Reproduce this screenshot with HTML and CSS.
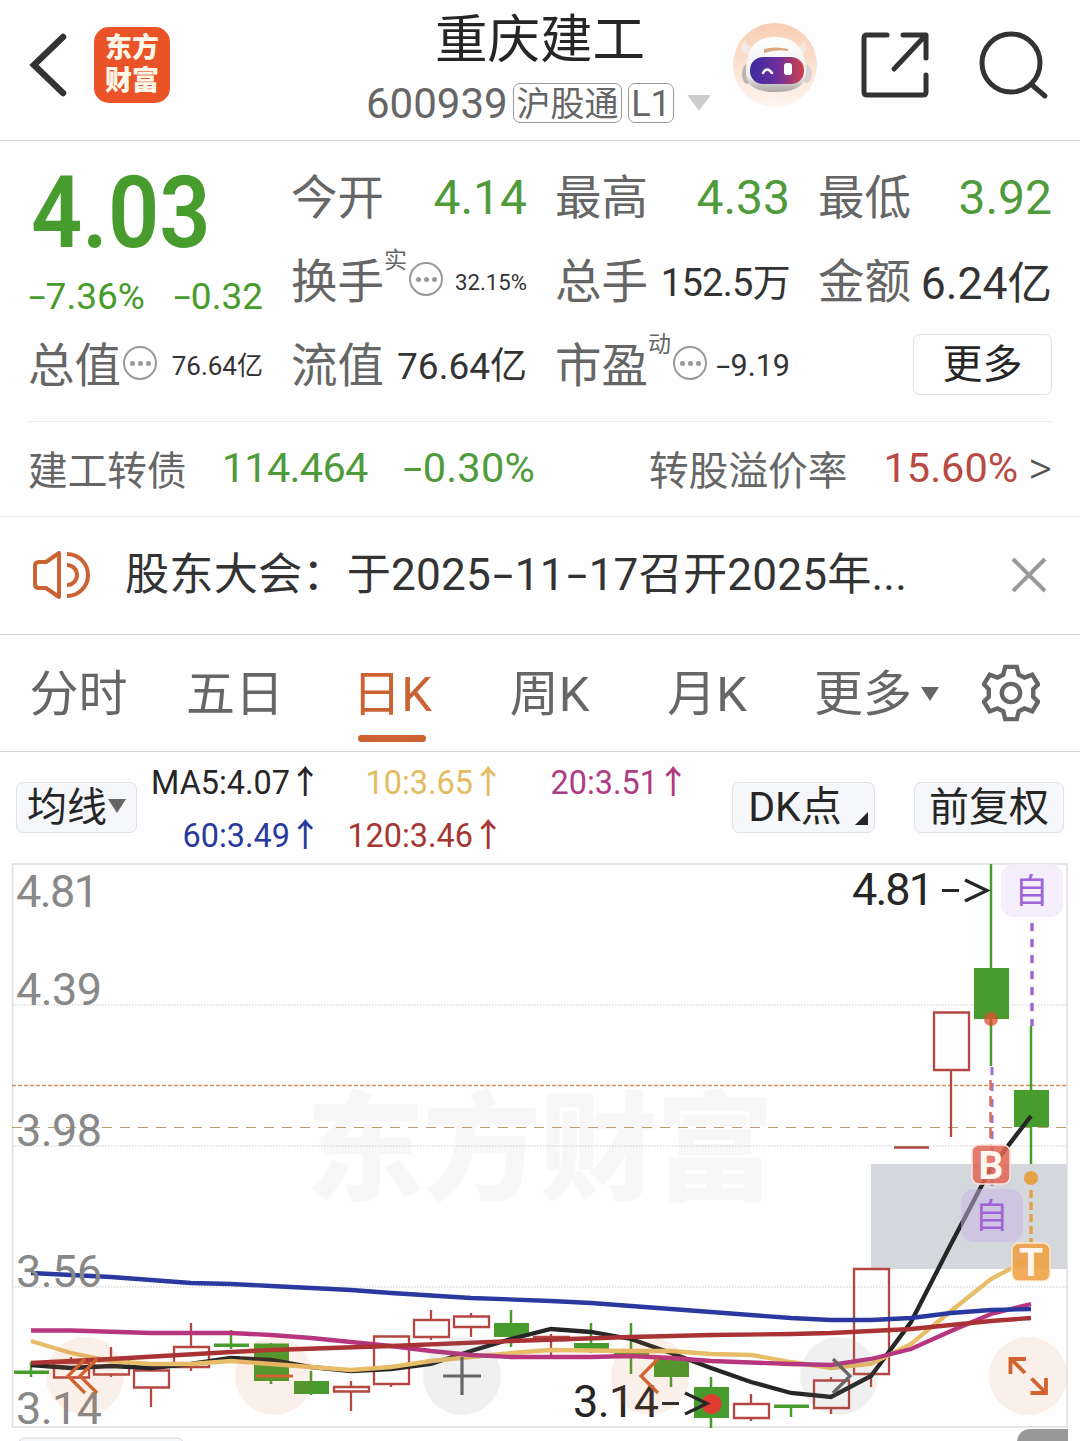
FILE: index.html
```html
<!DOCTYPE html>
<html lang="zh-CN">
<head>
    <meta charset="UTF-8">
    <title>重庆建工 600939</title>
    <link rel="stylesheet" href="styles.css">
</head>
<body>
    <header class="header">
        <svg class="back" width="40" height="66" viewBox="0 0 40 66"><path d="M35 5 L6 33 L35 61" fill="none" stroke="#333" stroke-width="6.5" stroke-linecap="round"/></svg>
        <div class="logo"><span>东方</span><span>财富</span></div>
        <div class="stock">
            <h1>重庆建工</h1>
            <div class="code">
                <span class="code-num">600939</span>
                <span class="tag">沪股通</span>
                <span class="tag tag-l1">L1</span>
                <svg class="caret" width="26" height="18" viewBox="0 0 26 18"><path d="M2 1.500h22L13 16z" fill="#ccc" stroke="#ccc" stroke-linejoin="round"/></svg>
            </div>
        </div>
        <svg class="avatar" width="86" height="88" viewBox="0 0 86 88">
            <defs>
                <linearGradient id="skin" x1="0" y1="0" x2="0" y2="1"><stop offset="0" stop-color="#f8cdb2"/><stop offset="1" stop-color="#fff5f0"/></linearGradient>
                <linearGradient id="visor" x1="0" y1="0" x2="1" y2="0"><stop offset="0" stop-color="#3b2ba0"/><stop offset=".5" stop-color="#6b2f9e"/><stop offset="1" stop-color="#d2414b"/></linearGradient>
                <linearGradient id="helmet" x1="0" y1="0" x2="0" y2="1"><stop offset="0" stop-color="#fff"/><stop offset=".7" stop-color="#f1efee"/><stop offset="1" stop-color="#aaa4a3"/></linearGradient>
            </defs>
            <circle cx="43" cy="44" r="42" fill="url(#skin)"/>
            <path d="M13 19c-6 6-5 14 5 15l8-8c-8 1-12-2-13-7zM72 19c4 6 3 14-4 15l-9-8c8 1 12-2 13-7z" fill="#f3e8e3"/>
            <ellipse cx="15" cy="53" rx="5" ry="10" fill="#b9b4b4"/>
            <ellipse cx="75" cy="53" rx="5" ry="9" fill="#d9d4d3"/>
            <path d="M14 48C15 25 25 16 43 16s29 9 31 32c1 17-10 23-31 23S13 64 14 48z" fill="url(#helmet)"/>
            <path d="M32 28q11-3 24 0v2q-12-2-24 2z" fill="#d9a77e"/>
            <rect x="18" y="36" width="54" height="27" rx="13" fill="url(#visor)"/>
            <path d="M31 52q4-7 9 0" fill="none" stroke="#fff" stroke-width="2.500" stroke-linecap="round"/>
            <rect x="52" y="42" width="8" height="12" rx="3" fill="#fff"/>
        </svg>
        <svg class="share" width="70" height="70" viewBox="0 0 70 70" fill="none" stroke="#333" stroke-width="5" stroke-linecap="round" stroke-linejoin="round"><path d="M27 5H7q-3 0-3 3v54q0 3 3 3h56q3 0 3-3V45M43 5h23v23M64 7L34 39"/></svg>
        <svg class="search" width="72" height="72" viewBox="0 0 72 72" fill="none" stroke="#333" stroke-width="5" stroke-linecap="round"><circle cx="33" cy="34" r="29"/><path d="M54 56l13 11"/></svg>
    </header>

    <section class="quote">
        <div class="price-box">
            <div class="price">4.03</div>
            <div class="change"><span><i class="dash">-</i>7.36%</span><span><i class="dash">-</i>0.32</span></div>
        </div>
        <div class="cell"><span class="label">今开</span><span class="val green v48">4.14</span></div>
        <div class="cell"><span class="label">最高</span><span class="val green v48">4.33</span></div>
        <div class="cell"><span class="label">最低</span><span class="val green v48">3.92</span></div>
        <div class="cell"><span class="label">换手</span><sup>实</sup><span class="dots"><b></b><b></b><b></b></span><span class="val v22">32.15%</span></div>
        <div class="cell"><span class="label">总手</span><span class="val unit v38">152.5<em>万</em></span></div>
        <div class="cell"><span class="label">金额</span><span class="val unit v45">6.24<em>亿</em></span></div>
        <div class="cell"><span class="label">总值</span><span class="dots"><b></b><b></b><b></b></span><span class="val unit v26">76.64<em>亿</em></span></div>
        <div class="cell"><span class="label">流值</span><span class="val unit v37">76.64<em>亿</em></span></div>
        <div class="cell"><span class="label">市盈</span><sup>动</sup><span class="dots"><b></b><b></b><b></b></span><span class="val v30"><i class="dash">-</i>9.19</span></div>
        <div class="cell"><button class="more">更多</button></div>
    </section>

    <section class="bond">
        <span class="bond-name">建工转债</span>
        <span class="bond-price">114.464</span>
        <span class="bond-rate"><i class="dash">-</i>0.30%</span>
        <span class="premium">转股溢价率</span>
        <span class="premium-rate">15.60%</span>
        <span class="gt">&gt;</span>
    </section>

    <section class="notice">
        <svg width="58" height="50" viewBox="0 0 58 50" fill="none" stroke="#cb6232" stroke-width="4"><path d="M26 3v44L13 38H6q-4 0-4-4V16q0-4 4-4h7z" stroke-linejoin="round"/><path d="M34 4a21 21 0 0 1 0 42M34 15a10 10 0 0 1 0 20"/></svg>
        <p>股东大会：于2025<i class="dash">-</i>11<i class="dash">-</i>17召开2025年...</p>
        <svg width="36" height="36" viewBox="0 0 36 36" stroke="#999" stroke-width="4"><path d="M2 2l32 32M34 2L2 34"/></svg>
    </section>

    <nav class="tabs">
        <a>分时</a>
        <a>五日</a>
        <a class="active">日K</a>
        <a>周K</a>
        <a>月K</a>
        <a>更多<span class="arrow-down"></span></a>
        <svg width="58" height="58" viewBox="0 0 60 60" fill="none" stroke="#666" stroke-width="4.500"><path d="M24 3h12l2 8 6 3 8-3 6 10-5 5v8l5 5-6 10-8-3-6 3-2 8H24l-2-8-6-3-8 3-6-10 5-5v-8l-5-5 6-10 8 3 6-3z"/><circle cx="30" cy="30" r="9.500"/></svg>
    </nav>

    <section class="toolbar">
        <button class="ma-btn">均线<span class="arrow-down"></span></button>
        <div class="ma">
            <span class="ma5">MA5:4.07<u>↑</u></span><span class="ma10">10:3.65<u>↑</u></span><span class="ma20">20:3.51<u>↑</u></span>
            <span class="ma60">60:3.49<u>↑</u></span><span class="ma120">120:3.46<u>↑</u></span>
        </div>
        <button class="dk">DK点<span class="corner"></span></button>
        <button class="fq">前复权</button>
    </section>

    <svg class="chart" width="1080" height="579" viewBox="0 862 1080 579">
        <text class="watermark" x="306" y="1191" textLength="468">东方财富</text>
        <g class="grid">
            <path d="M12 1005H1067M12 1146H1067M12 1287H1067"/>
        </g>
        <rect x="12.500" y="864" width="1054.500" height="563" fill="none" stroke="#dedede" stroke-width="1.500"/>
        <path d="M12 1085.500H1067" stroke="#c7945c" stroke-width="1.500" stroke-dasharray="4 2"/>
        <path d="M12 1127.500H1067" stroke="#b99d6b" stroke-width="1.200" stroke-dasharray="10 8"/>
        <rect x="871" y="1164" width="196" height="105" fill="#d4d7dc"/>
        <g id="candles"></g>
        <g id="lines"></g>

        <g class="axis">
            <text x="16" y="906.500" textLength="83">4.81</text>
            <text x="16" y="1004.500" textLength="86">4.39</text>
            <text x="16" y="1145.500" textLength="86">3.98</text>
            <text x="16" y="1286.500" textLength="86">3.56</text>
            <text x="16" y="1423.500" textLength="86">3.14</text>
        </g>

        <!-- buy / sell / watch marks -->
        <path d="M992 1067V1186" stroke="#a46bdc" stroke-width="3" stroke-dasharray="8 8"/>
        <path d="M990.500 1080V1146" stroke="#d9705f" stroke-width="2.500" stroke-dasharray="10 6"/>
        <path d="M1032 923V1026" stroke="#9c68d4" stroke-width="3.500" stroke-dasharray="8 8"/>
        <path d="M1031 1190V1243" stroke="#e2a24b" stroke-width="3.500" stroke-dasharray="8 4"/>
        <circle cx="991" cy="1019" r="7" fill="#dc4f2c" fill-opacity=".75"/>
        <circle cx="1031" cy="1178" r="7" fill="#e7a146"/>
        <rect x="972" y="1145" width="38" height="39" rx="7" fill="#df6555" fill-opacity=".85" stroke="#f9e2dc" stroke-width="1.500"/>
        <text class="mark" x="991" y="1178.500" text-anchor="middle">B</text>
        <rect x="961" y="1189" width="62" height="53" rx="13" fill="#c8b6e6" fill-opacity=".5"/>
        <text class="self" x="991.500" y="1227.500" text-anchor="middle">自</text>
        <rect x="1001" y="864" width="62" height="53" rx="13" fill="#f3edfc"/>
        <text class="self" x="1031.500" y="903" text-anchor="middle">自</text>
        <rect x="1012" y="1243" width="38" height="38" rx="7" fill="#efa143" fill-opacity=".88" stroke="#fbe7cc" stroke-width="1.500"/>
        <text class="mark" x="1031" y="1276" text-anchor="middle">T</text>
        <circle cx="711.500" cy="1404" r="10" fill="#e03c30"/>

        <g class="peak">
            <text x="852" y="904.500" textLength="82">4.81</text><path d="M942 890.500h17M965 880l22 10.500-22 10.500"/>
            <text x="573" y="1417" textLength="86">3.14</text><path d="M662 1403.500h17M685 1393l22 10.500-22 10.500"/>
        </g>

        <!-- round controls -->
        <g fill-opacity=".1">
            <g fill="#d86a30"><circle cx="85" cy="1376" r="39"/><circle cx="274" cy="1376" r="39"/><circle cx="650" cy="1376" r="39"/><circle cx="1028" cy="1376" r="39"/></g>
            <g fill="#777"><circle cx="462" cy="1376" r="39"/><circle cx="839" cy="1376" r="39"/></g>
        </g>
        <g fill="none" stroke="#d2622e" stroke-width="3.200">
            <path d="M85 1359l-17 17 17 17M97 1359l-17 17 17 17M256 1376h37M658 1359l-17 17 17 17"/>
            <path d="M1010.500 1374v-15h15.500M1012 1360l13 13M1030.500 1393h15.500v-15M1045 1392l-13.500-13.500" stroke-width="3.800"/>
        </g>
        <path d="M443 1376h38M462 1357v38M833 1359l17 17-17 17" fill="none" stroke="#666" stroke-width="3.200"/>

        <rect x="18" y="1438" width="166" height="30" rx="7" fill="#f6f7fa" stroke="#d4d7da"/>
        <path d="M1017 1441q2-12 14-12h37v12z" fill="#999"/>
    </svg>

    <script>
        // [color, top, bottom, high, low], one candle every 40px
        const candles = [
            ['g', 1370.5, 1374, 1362, 1377], ['r', 1363, 1377.5, 1357, 1377], ['r', 1361, 1374.5, 1347, 1377],
            ['r', 1370.5, 1387.5, 1370, 1407], ['r', 1347, 1367, 1323, 1371], ['g', 1343.5, 1347, 1330, 1349],
            ['g', 1343.5, 1381, 1343, 1384], ['g', 1381, 1394, 1371, 1395], ['r', 1387, 1391.5, 1381, 1411],
            ['r', 1336.5, 1384, 1336, 1387], ['r', 1320, 1337, 1310, 1340], ['r', 1316.5, 1327, 1313, 1337],
            ['g', 1323, 1337, 1310, 1347], ['r', 1337, 1340, 1334, 1355], ['g', 1343, 1350, 1323, 1353],
            ['g', 1352, 1356, 1323, 1374], ['g', 1358, 1377, 1358, 1387], ['g', 1387, 1418, 1377, 1428],
            ['r', 1404, 1418, 1394, 1421], ['g', 1404.5, 1408, 1405, 1417], ['r', 1380.5, 1408, 1377, 1414],
            ['r', 1269, 1374, 1269, 1387], ['r', 1147.5, 1147.5, 1147, 1148], ['r', 1012.5, 1070, 1012, 1137],
            ['g', 968, 1019, 864, 1066], ['g', 1090, 1127, 1026, 1164]
        ];
        let html = '';
        candles.forEach(([color, top, bottom, high, low], i) => {
            const x = 31 + i * 40;
            if (color === 'g') {
                html += `<path d="M${x} ${high}V${low}" stroke="#479c2d" stroke-width="2.5"/>`;
                html += `<rect x="${x - 17}" y="${top}" width="35" height="${bottom - top}" fill="#479c2d"/>`;
            } else if (top === bottom) {
                html += `<path d="M${x - 17} ${top}h35" stroke="#a9443f" stroke-width="2.5"/>`;
            } else {
                html += `<path d="M${x} ${high}V${top}M${x} ${bottom}V${low}M${x - 17} ${top}h35V${bottom}h-35z" fill="none" stroke="#b54742" stroke-width="2.3"/>`;
            }
        });
        document.getElementById('candles').innerHTML = html;

        const lines = [
            ['#262626', '31,1365 71,1368 111,1366 151,1368 191,1364 231,1358 271,1360 311,1367 351,1371 391,1369 431,1364 471,1351 511,1339 551,1329 591,1332 631,1339 671,1353 711,1368 751,1382 791,1393 831,1397 871,1376 911,1322 951,1244 991,1168 1031,1116'],
            ['#e8bd68', '31,1341 71,1353 111,1361 151,1364 191,1364 231,1361 271,1364 311,1367 351,1370 391,1367 431,1361 471,1357 511,1353 551,1350 631,1351 671,1351 711,1354 751,1355 791,1362 831,1368 871,1364 911,1344 951,1311 991,1279 1031,1258'],
            ['#b7357f', '31,1330.5 71,1330.5 151,1333 231,1333 271,1335 311,1338 351,1342 391,1346 431,1351 471,1355 511,1357 591,1357 631,1356 671,1358 711,1361 791,1364 831,1365 871,1359 911,1349 951,1331 991,1314 1031,1304'],
            ['#a93334', '31,1363 111,1359 231,1352 271,1350 391,1346 511,1341 631,1337 711,1335 791,1334 831,1333 911,1329 991,1321 1031,1318'],
            ['#2939a0', '31,1273 71,1275 111,1277 151,1280 191,1283 231,1284 271,1286 351,1290 391,1293 471,1298 551,1301 591,1303 631,1306 711,1312 791,1318 831,1320 871,1320 911,1318 951,1313 991,1310 1031,1309']
        ];
        document.getElementById('lines').innerHTML = lines.map(([color, points]) =>
            `<polyline points="${points}" fill="none" stroke="${color}" stroke-width="4.3"/>`).join('');
    </script>
</body>
</html>
```
FILE: styles.css
```css
* {
    box-sizing: border-box;
}
body {
    margin: 0;
    width: 1080px;
    height: 1441px;
    overflow: hidden;
    background: #fefefe;
    color: #333;
    font-family: Roboto, "Noto Sans CJK SC", sans-serif;
}
svg {
    display: block;
    flex: none;
}
button {
    font-family: inherit;
    color: #262626;
    padding: 0;
    border: 1.5px solid #dfe1e4;
    border-radius: 7px;
    background: #f6f7fa;
    font-size: 40px;
    line-height: 49px;
    white-space: nowrap;
}
em, i {
    font-style: normal;
}
.dash {
    display: inline-block;
    transform: scaleX(1.65);
    margin: 0 .1em;
}

/* header */
.header {
    display: flex;
    align-items: flex-start;
    height: 141px;
    padding-left: 28px;
    border-bottom: 1.5px solid #d6d6d6;
}
.back {
    margin-top: 32px;
}
.logo {
    display: flex;
    flex-direction: column;
    justify-content: center;
    align-items: center;
    width: 76px;
    height: 76px;
    margin: 27px 0 0 26px;
    border-radius: 15px;
    background: #ea5328;
    color: #fff8ea;
    font-size: 27px;
    font-weight: 900;
    line-height: 33px;
}
.stock {
    width: 348px;
    margin: 0 -2px 0 196px;
}
.stock h1 {
    margin: 0;
    padding-top: 4px;
    font-size: 52.500px;
    font-weight: 400;
    line-height: 72px;
    color: #262626;
    text-align: center;
}
.code {
    display: flex;
    align-items: center;
    height: 54px;
    color: #666;
}
.code-num {
    width: 147px;
    font-size: 42px;
}
.tag {
    width: 109px;
    height: 40px;
    margin-right: 6px;
    border: 1.5px solid #999;
    border-radius: 7px;
    font-size: 34px;
    line-height: 40px;
    text-align: center;
}
.tag-l1 {
    width: 46px;
    font-size: 36px;
}
.caret {
    margin-left: 6px;
}
.avatar {
    margin: 21px 0 0 20px;
}
.share {
    margin: 30px 0 0 42px;
}
.search {
    margin: 29px 0 0 48px;
}

/* quote */
.quote {
    display: grid;
    grid-template-columns: 235px 236px 235px 234px;
    grid-template-rows: 84px 84px 84px;
    column-gap: 28px;
    height: 281px;
    margin: 0 28px;
    padding-top: 15px;
    border-bottom: 1.5px solid #eee;
}
.price-box {
    grid-row: span 2;
    color: #479c2d;
}
.price {
    margin: -3px 0 0 3px;
    font-size: 101px;
    font-weight: 600;
    line-height: 119px;
    transform: scaleX(.89);
    transform-origin: left;
}
.change {
    display: flex;
    justify-content: space-between;
    font-size: 37px;
    line-height: 49px;
}
.cell {
    display: flex;
    align-items: center;
    white-space: nowrap;
}
.label {
    margin-top: -9px;
    font-size: 46.500px;
    color: #666;
}
.cell sup {
    align-self: flex-start;
    margin-top: 4px;
    font-size: 23px;
    line-height: 34px;
    color: #666;
}
.val {
    margin: -1px 0 0 auto;
}
.unit {
    margin-top: -6px;
}
.green {
    color: #4f9a3b;
}
.v48 { font-size: 48px; }
.v45 { font-size: 44.500px; }
.v38 { font-size: 38px; letter-spacing: -.7px; }
.v37 { font-size: 37px; }
.v30 { font-size: 30.500px; }
.v26 { font-size: 26px; }
.v22 { font-size: 22.200px; }
.dots {
    display: flex;
    justify-content: center;
    align-items: center;
    gap: 3px;
    width: 34px;
    height: 34px;
    margin: -6px 0 0 2px;
    border: 2.500px solid #999;
    border-radius: 50%;
}
.dots b {
    width: 5px;
    height: 5px;
    border-radius: 50%;
    background: #999;
}
.more {
    width: 139px;
    height: 61px;
    margin: -3px 0 0 auto;
    background: #fefefe;
    line-height: 56px;
}

/* convertible bond */
.bond {
    display: flex;
    align-items: center;
    height: 95px;
    padding: 0 28px 3px;
    border-bottom: 1.5px solid #eee;
    font-size: 41.500px;
    color: #4f9a3b;
    white-space: nowrap;
}
.bond-name, .premium {
    font-size: 39.700px;
    color: #666;
}
.bond-price {
    margin-left: 35px;
    letter-spacing: -.7px;
}
.bond-rate {
    margin-left: 35px;
    letter-spacing: .2px;
}
.premium {
    margin-left: auto;
}
.premium-rate {
    margin-left: 36px;
    color: #b94a43;
}
.gt {
    margin-left: 10px;
    font-size: 46px;
    font-weight: 300;
    color: #555;
}

/* notice */
.notice {
    display: flex;
    align-items: center;
    height: 118px;
    padding: 0 33px 2px;
    border-bottom: 1.5px solid #d6d6d6;
}
.notice p {
    flex: 1;
    margin: -7px 0 0 34px;
    font-size: 44.200px;
    letter-spacing: .15px;
    white-space: nowrap;
}
.notice .dash {
    margin: 0 .13em;
}

/* tabs */
.tabs {
    display: grid;
    grid-template-columns: 157px 156px 158px 157px 158px 1fr 58px;
    align-items: center;
    justify-items: center;
    height: 117px;
    padding-right: 40px;
    border-bottom: 1.5px solid #d6d6d6;
    font-size: 49px;
    color: #666;
}
.tabs a {
    position: relative;
    margin-top: -8px;
    white-space: nowrap;
}
.tabs a:nth-child(6) {
    justify-self: start;
    margin-left: 28px;
}
.tabs .active {
    color: #cb6232;
}
.tabs .active::after {
    content: "";
    position: absolute;
    left: 6px;
    bottom: -17px;
    width: 68px;
    height: 7px;
    border-radius: 4px;
    background: #cb6232;
}
.arrow-down {
    display: inline-block;
    margin-left: 9px;
    vertical-align: 10px;
    border: 9px solid transparent;
    border-top: 14px solid #666;
    border-bottom: 0;
}

/* moving averages */
.toolbar {
    display: flex;
    align-items: flex-start;
    height: 110px;
    padding: 0 16px;
}
.toolbar button {
    height: 51px;
    margin-top: 30px;
}
.ma-btn {
    width: 121px;
}
.ma-btn .arrow-down {
    margin-left: 1px;
    vertical-align: 8px;
}
.ma {
    display: grid;
    grid-template-columns: 167px 183px 185px;
    grid-auto-rows: 53px;
    justify-items: end;
    width: 535px;
    margin: 1px 0 0 15px;
    font-size: 32.400px;
    line-height: 53px;
    white-space: nowrap;
}
.ma u {
    display: inline-block;
    width: 29px;
    text-decoration: none;
    font-family: "Noto Sans CJK SC", sans-serif;
    font-weight: 500;
    text-indent: -1px;
}
.ma5 { color: #262626; }
.ma10 { color: #e5bb62; }
.ma20 { color: #b03a83; }
.ma60 { color: #2939a0; }
.ma120 { color: #a53632; }
.dk {
    position: relative;
    width: 143px;
    margin-left: 45px;
    padding-right: 17px;
    font-size: 41px;
}
.corner {
    position: absolute;
    right: 6px;
    bottom: 7px;
    border-left: 13px solid transparent;
    border-bottom: 13px solid #262626;
}
.fq {
    width: 150px;
    margin-left: auto;
}

/* chart */
.watermark {
    font-size: 118px;
    font-weight: 900;
    fill: #f7f7f7;
}
.grid path {
    stroke: #ddd;
    stroke-width: 1.5;
    stroke-dasharray: 1.500 1.500;
}
.axis text {
    font-size: 45px;
    fill: #888;
}
.peak text {
    font-size: 45px;
    fill: #262626;
}
.peak path {
    fill: none;
    stroke: #262626;
    stroke-width: 3.2;
}
.mark {
    font-size: 39px;
    font-weight: 700;
    fill: #fff6ee;
}
.self {
    font-size: 34px;
    fill: #a064d8;
}
```
